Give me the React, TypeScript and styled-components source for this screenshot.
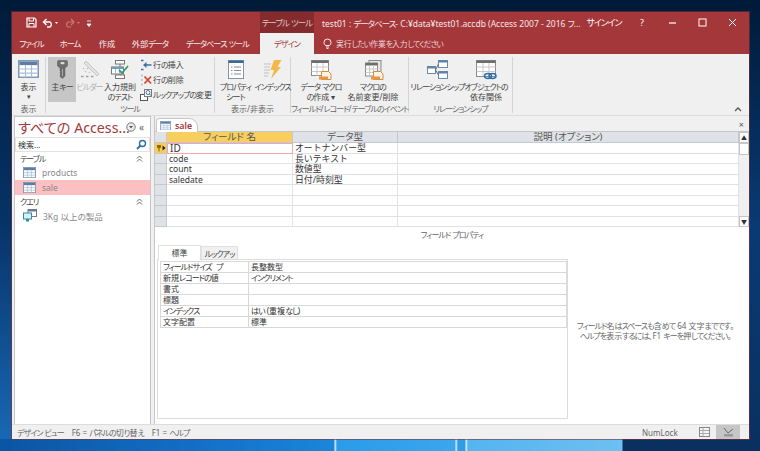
import React from 'react'
import styled, { createGlobalStyle } from 'styled-components'

const Global = createGlobalStyle`
  html, body { margin: 0; padding: 0; height: 100%; }
  body {
    font-family: "Noto Sans", "Noto Sans CJK JP", sans-serif;
    font-feature-settings: "palt" 1;
    overflow: hidden;
  }
`

const RED = '#a4373a'

// kana in the screenshot's UI font are much narrower than the kanji
const Kana = styled.span`
  letter-spacing: -0.12em;
`

const T = ({ children }: { children: string }) => (
  <>
    {children.split(/([ァ-ヶーぁ-ん]+)/).map((part, i) =>
      i % 2 ? <Kana key={i}>{part}</Kana> : part
    )}
  </>
)

const TableIcon = ({ size = 14 }: { size?: number }) => (
  <svg width={size} height={size * 0.86} viewBox="0 0 14 12">
    <rect x="0.5" y="0.5" width="13" height="11" fill="#fff" stroke="#7d98b5" />
    <rect x="1" y="1" width="12" height="2.4" fill="#5d7ea3" />
    <path d="M5 3.5v8M9 3.500v8M1 6h12M1 8.700h12" stroke="#a9bdd3" strokeWidth="0.8" />
  </svg>
)

const QueryIcon = () => (
  <svg width="14" height="13" viewBox="0 0 14 13">
    <rect x="5" y="0.5" width="8.5" height="7" fill="#fff" stroke="#6a7d90" />
    <rect x="5" y="0.5" width="8.5" height="2" fill="#6a7d90" />
    <rect x="0.5" y="4" width="8" height="6" fill="#dceef3" stroke="#2e8ca6" />
    <rect x="3" y="10" width="3" height="2.5" fill="#2e8ca6" />
  </svg>
)

const KeyIcon = () => (
  <svg width="11" height="19" viewBox="0 0 11 19">
    <path d="M1 .5h9l.5 1v4.500L8 8v8l-2.500 2.500L3 16.500v-1.500l1-.7-1-.8v-1l1-.7-1-.8V8L.5 6V1.500z" fill="#6d6d6d" stroke="#5c5c5c" strokeWidth="0.5" />
    <rect x="3.500" y="2" width="4" height="2.200" rx="0.8" fill="#d8d8d8" />
    <path d="M5.500 9v7" stroke="#b4b4b4" strokeWidth="0.8" />
  </svg>
)

const BuilderIcon = () => (
  <svg width="20" height="19" viewBox="0 0 20 19">
    <path d="M6 1l13 13-2 2L4 3z" fill="#e2e2e2" stroke="#c4c4c4" />
    <path d="M3 8l1 1M7 8l1 1M5 11l1 1M9 12l1 1" stroke="#bcbcbc" strokeWidth="1.200" />
    <path d="M1 16.500h2.500M6 16.500h2.500M11 16.500h2.500" stroke="#9c9c9c" strokeWidth="1.400" />
  </svg>
)

const ValidationIcon = () => (
  <svg width="20" height="19" viewBox="0 0 20 19">
    <path d="M10 4v3M10 14v2" stroke="#777" />
    <rect x="5.500" y="0.500" width="9" height="3.500" fill="#fff" stroke="#777" />
    <rect x="5.500" y="15" width="9" height="3.500" fill="#fff" stroke="#777" />
    <rect x="1.500" y="7" width="12" height="7" fill="#fff" stroke="#777" />
    <rect x="1.500" y="7" width="12" height="2" fill="#6f9dbb" />
    <path d="M5.500 9v5M9.500 9v5" stroke="#9bb" />
    <path d="M9 10l3 3 6-7" fill="none" stroke="#3c9a5f" strokeWidth="1.800" />
  </svg>
)

const InsertRowIcon = () => (
  <svg width="12" height="12" viewBox="0 0 12 12">
    <path d="M1 1.500h2.500M1 10.500h2.500" stroke="#3e6f9e" strokeWidth="1.500" />
    <path d="M11.500 6H6" stroke="#6a8fb3" strokeWidth="2" />
    <path d="M6.500 3L3 6l3.500 3z" fill="#3e6f9e" />
  </svg>
)

const DeleteRowIcon = () => (
  <svg width="12" height="12" viewBox="0 0 12 12">
    <path d="M1 1.500h2M1 6h2M1 10.500h2" stroke="#a9bdd0" strokeWidth="1.300" />
    <path d="M4.500 2.500l6.500 7M11 2.500l-6.500 7" stroke="#d2452f" strokeWidth="1.800" />
  </svg>
)

const LookupIcon = () => (
  <svg width="12" height="12" viewBox="0 0 12 12">
    <rect x="0.500" y="5.500" width="7" height="6" fill="#fff" stroke="#555" />
    <rect x="4.500" y="0.500" width="7" height="7" fill="#fff" stroke="#7c7c7c" />
    <circle cx="8" cy="3.500" r="2" fill="none" stroke="#3e6f9e" />
    <path d="M9.500 5l2 2" stroke="#3e6f9e" />
  </svg>
)

const SheetIcon = () => (
  <svg width="16" height="19" viewBox="0 0 16 19">
    <rect x="0.500" y="0.500" width="15" height="18" fill="#fff" stroke="#8a95a0" />
    <rect x="0.500" y="0.500" width="15" height="2.500" fill="#3d6b94" />
    <path d="M3 7h1.500M6 7h7M3 10.500h1.500M6 10.500h7M3 14h1.500M6 14h7" stroke="#8a8a8a" />
  </svg>
)

const IndexIcon = () => (
  <svg width="18" height="19" viewBox="0 0 18 19">
    <path d="M0 4h7M0 7h6M0 10h6M0 13h5M0 16h4" stroke="#cfcfcf" strokeWidth="1.400" />
    <path d="M10 0h7.500l-4 7H17L7 19l3-9H6.500z" fill="#f2b84a" />
  </svg>
)

const MacroIcon = ({ stack }: { stack?: boolean }) => (
  <svg width="21" height="20" viewBox="0 0 21 20">
    {stack && <rect x="6" y="0.500" width="12" height="14" fill="#e6e6e6" stroke="#8a8a8a" />}
    <rect x={stack ? 2.500 : 0.500} y={stack ? 3 : 0.500} width={stack ? 12 : 17} height={stack ? 13 : 15} fill="#fff" stroke="#8a8a8a" />
    <rect x={stack ? 2.500 : 0.500} y={stack ? 3 : 0.500} width={stack ? 12 : 17} height="2.500" fill="#6e6e6e" />
    <path d={stack ? 'M6.500 5.500v10M10.500 5.500v10M2.500 9h12M2.500 12.500h12' : 'M6 3v13M12 3v13M.5 7h17M.5 11.500h17'} stroke="#c8c8c8" />
    <path d="M10.500 11.500h7l2.500 2.500v5.500h-9.500z" fill="#fff4e6" stroke="#d98a3c" />
    <path d="M8 16.500h9v3H8z" fill="#e8973f" />
  </svg>
)

const RelationIcon = () => (
  <svg width="21" height="19" viewBox="0 0 21 19">
    <rect x="11.500" y="0.500" width="9" height="7" fill="#fff" stroke="#6b8bab" />
    <rect x="11.500" y="0.500" width="9" height="2" fill="#5d83a8" />
    <rect x="0.500" y="6.500" width="8" height="7" fill="#fff" stroke="#6b8bab" />
    <rect x="0.500" y="6.500" width="8" height="2" fill="#5d83a8" />
    <rect x="11.500" y="11.500" width="9" height="7" fill="#fff" stroke="#6b8bab" />
    <rect x="11.500" y="11.500" width="9" height="2" fill="#5d83a8" />
    <path d="M8.500 10l3-6M8.500 10l3 5" stroke="#666" />
  </svg>
)

const DependencyIcon = () => (
  <svg width="21" height="20" viewBox="0 0 21 20">
    <rect x="0.500" y="0.500" width="19" height="16" fill="#fff" stroke="#8a8a8a" />
    <rect x="0.500" y="0.500" width="19" height="2.500" fill="#6e6e6e" />
    <path d="M7 3v13M13 3v13M.5 7h19M.5 11.500h19" stroke="#c8c8c8" />
    <ellipse cx="12" cy="16" rx="3.500" ry="2.400" fill="none" stroke="#2f6ea8" strokeWidth="1.500" />
    <ellipse cx="16.500" cy="16" rx="3.500" ry="2.400" fill="none" stroke="#2f6ea8" strokeWidth="1.500" />
  </svg>
)

const DoubleUp = () => (
  <svg width="7" height="7" viewBox="0 0 7 7">
    <path d="M1 3.500l2.500-2.500 2.500 2.500M1 6.500l2.500-2.500 2.500 2.500" fill="none" stroke="#555" strokeWidth="0.900" />
  </svg>
)

const Page = styled.div`
  width: 760px;
  height: 451px;
  box-sizing: border-box;
  padding: 12px 11px 12px 12px;
  background:
    linear-gradient(90deg, #0b55a2 0, #1474cc 230px, #1b86d8 334px, #e8f4fc 335px, #2a9ce8 337px, #3aa6ee 455px, #e8f4fc 456px, #2f9ce6 458px, #2f9ce6 465px, #e8f4fc 466px, #55b4f0 468px, #6cc0f2 622px, #0a3060 623px) 0 439px / 100% 12px no-repeat,
    linear-gradient(180deg, #001a38 0%, #063468 50%, #1a6ab8 100%) 0 0 / 12px 100% no-repeat,
    linear-gradient(180deg, #001a38 0%, #0a3a74 50%, #0a3060 100%);
`

const Window = styled.div`
  width: 737px;
  height: 427px;
  display: flex;
  flex-direction: column;
  background: #fff;
  box-shadow: 0 0 0 1px rgba(130, 50, 55, 0.6);
`

const TitleBar = styled.div`
  height: 21px;
  flex: none;
  display: flex;
  align-items: center;
  background: ${RED};
  color: #fff;
  font-size: 9px;
  white-space: nowrap;
`

const Quick = styled.div`
  width: 248px;
  flex: none;
  display: flex;
  align-items: center;
  gap: 5px;
  padding-left: 14px;
  box-sizing: border-box;
`

const ToolLabel = styled.div`
  width: 54px;
  flex: none;
  height: 21px;
  line-height: 21px;
  text-align: center;
  background: #842b2e;
  color: #e3c3c4;
  font-size: 8.5px;
`

const DocTitle = styled.div`
  width: 267px;
  flex: none;
  padding-left: 8px;
  box-sizing: border-box;
  font-size: 8.5px;
  color: #f6e7e7;
`

const WinButtons = styled.div`
  flex: 1;
  display: flex;
  align-items: center;
  font-size: 9px;
`

const SignIn = styled.span`
  width: 46px;
  text-align: center;
`

const WinBtn = styled.span`
  width: 30px;
  display: flex;
  justify-content: center;
`

const TabBar = styled.div`
  height: 21px;
  flex: none;
  display: flex;
  background: ${RED};
  font-size: 8.2px;
  color: #fbeeee;
  white-space: nowrap;
`

const RibbonTab = styled.div<{ $w: number; $active?: boolean }>`
  width: ${p => p.$w}px;
  text-align: center;
  line-height: 21px;
  ${p => p.$active && `background: #f0f0f0; color: ${RED};`}
`

const TellMe = styled.div`
  display: flex;
  align-items: center;
  gap: 4px;
  padding-left: 9px;
  font-size: 7.8px;
  color: #eed5d5;
`

const Ribbon = styled.div`
  height: 62px;
  flex: none;
  display: flex;
  background: #f0f0f0;
  border-bottom: 1px solid #dcdcdc;
  box-sizing: border-box;
  position: relative;
`

const Group = styled.div<{ $w: number; $last?: boolean }>`
  width: ${p => p.$w}px;
  flex: none;
  box-sizing: border-box;
  display: flex;
  flex-direction: column;
  margin: 3px 0 2px;
  ${p => !p.$last && 'border-right: 1px solid #d4d4d4;'}
`

const Buttons = styled.div<{ $pad?: number }>`
  flex: 1;
  display: flex;
  padding-left: ${p => p.$pad ?? 0}px;
`

const GroupLabel = styled.div`
  height: 13px;
  line-height: 13px;
  text-align: center;
  font-size: 8px;
  color: #666;
  white-space: nowrap;
`

const BigBtn = styled.div<{ $w: number; $on?: boolean; $off?: boolean }>`
  width: ${p => p.$w}px;
  flex: none;
  height: 45px;
  display: flex;
  flex-direction: column;
  align-items: center;
  font-size: 8px;
  line-height: 10px;
  text-align: center;
  white-space: nowrap;
  color: ${p => (p.$off ? '#b0b0b0' : '#444')};
  ${p => p.$on && 'background: #c6c6c6;'}
`

const IconSlot = styled.div`
  height: 25px;
  padding-top: 3px;
  box-sizing: border-box;
  display: flex;
  align-items: flex-start;
  justify-content: center;
  flex: none;
`

const BtnText = styled.div`
  text-align: center;
`

const Caret = styled.span`
  font-size: 7px;
  line-height: 9px;
`

const SmallStack = styled.div`
  display: flex;
  flex-direction: column;
  gap: 2px;
  padding: 1px 0 0 3px;
`

const SmallBtn = styled.div`
  height: 13px;
  display: flex;
  align-items: center;
  gap: 1px;
  font-size: 8px;
  color: #444;
  white-space: nowrap;
`

const Collapse = styled.span`
  position: absolute;
  right: 7px;
  bottom: 3px;
  line-height: 8px;
`

const Body = styled.div`
  flex: 1;
  min-height: 0;
  display: flex;
  background: #f0f0f0;
`

const NavPane = styled.div`
  width: 137px;
  flex: none;
  margin-left: 2px;
  background: #fff;
  border: 1px solid #c6c6c6;
  border-bottom: none;
  box-sizing: border-box;
`

const NavHead = styled.div`
  height: 20px;
  display: flex;
  align-items: center;
  padding-left: 3px;
  color: ${RED};
  font-size: 14.2px;
  white-space: nowrap;
`

const NavTitle = styled.span`
  width: 108px;
  flex: none;
`

const Chevron = styled.span`
  font-size: 10px;
  line-height: 10px;
  color: #666;
  margin-left: 3px;
`

const SearchBox = styled.div`
  height: 15px;
  display: flex;
  justify-content: space-between;
  align-items: center;
  padding: 0 2px;
  border: 1px solid #e2e2e2;
  box-sizing: border-box;
  font-size: 8px;
  color: #333;
`

const NavSection = styled.div`
  height: 13px;
  display: flex;
  justify-content: space-between;
  align-items: center;
  padding: 0 7px 0 5px;
  font-size: 8px;
  color: #444;
`

const NavItem = styled.div<{ $on?: boolean }>`
  height: 15px;
  display: flex;
  align-items: center;
  gap: 6px;
  padding-left: 8px;
  font-size: 8.5px;
  color: #888;
  background: ${p => (p.$on ? '#fcc0c2' : 'transparent')};
`

const Splitter = styled.div`
  width: 3px;
  flex: none;
`

const Main = styled.div`
  flex: 1;
  min-width: 0;
  display: flex;
  flex-direction: column;
  background: #fff;
  border-left: 1px solid #c6c6c6;
`

const DocTabs = styled.div`
  height: 15px;
  flex: none;
  display: flex;
  align-items: flex-end;
  justify-content: space-between;
  padding: 0 5px 0 1px;
  background: #f0f0f0;
  border-bottom: 1px solid #c6c6c6;
`

const DocTab = styled.div`
  width: 42px;
  height: 14px;
  display: flex;
  align-items: center;
  gap: 4px;
  padding-left: 3px;
  box-sizing: border-box;
  background: #fff;
  border: 1px solid #c6c6c6;
  border-bottom: none;
  border-radius: 4px 9px 0 0;
  color: ${RED};
  font-size: 8.8px;
  font-weight: 600;
  margin-bottom: -1px;
`

const DocClose = styled.span`
  font-size: 9px;
  line-height: 13px;
  color: #555;
`

const GridWrap = styled.div`
  display: flex;
  flex: none;
`

const Grid = styled.div`
  width: 584px;
  display: grid;
  grid-template-columns: 12px 126px 105px 1fr;
  grid-template-rows: 11px repeat(8, 10.5px);
`

const HeadCell = styled.div<{ $sel?: boolean }>`
  background: ${p => (p.$sel ? '#f6cf5e' : '#dfe2e6')};
  border-right: 1px solid #c5c9cf;
  border-bottom: 1px solid #c5c9cf;
  box-sizing: border-box;
  text-align: center;
  font-size: 9.5px;
  line-height: 10px;
  color: #555;
`

const RowHead = styled.div<{ $key?: boolean }>`
  background: ${p => (p.$key ? '#f7cd57' : '#dfe2e6')};
  border-right: 1px solid #c5c9cf;
  border-bottom: 1px solid #c5c9cf;
  box-sizing: border-box;
  display: flex;
  align-items: center;
  justify-content: center;
`

const Cell = styled.div<{ $focus?: boolean; $jp?: boolean }>`
  border-right: 1px solid #dfe2ea;
  border-bottom: 1px solid #dfe2ea;
  box-sizing: border-box;
  padding-left: 2px;
  font-size: ${p => (p.$jp ? 8.9 : 8.5)}px;
  font-feature-settings: normal;
  line-height: 10px;
  color: #333;
  white-space: nowrap;
  ${p => p.$focus && 'border: 1px solid #f0a8aa; font-size: 10px; line-height: 9px;'}
`

const Scroll = styled.div`
  flex: 1;
  display: flex;
  flex-direction: column;
  background: #f0f0f0;
`

const ScrollBtn = styled.div`
  height: 11px;
  text-align: center;
  font-size: 6px;
  line-height: 11px;
  background: #fff;
  border: 1px solid #c6c6c6;
  box-sizing: border-box;
  color: #333;
`

const ScrollThumb = styled.div`
  height: 12px;
  background: #fff;
  border: 1px solid #c6c6c6;
  box-sizing: border-box;
`

const ScrollTrack = styled.div`
  flex: 1;
`

const PropsTitle = styled.div`
  height: 17px;
  flex: none;
  text-align: center;
  font-size: 8px;
  line-height: 15px;
  color: #666;
`

const PropsArea = styled.div`
  flex: 1;
  min-height: 0;
  display: flex;
  padding: 0 0 5px 2px;
`

const PropsLeft = styled.div`
  width: 411px;
  flex: none;
  display: flex;
  flex-direction: column;
`

const PropTabs = styled.div`
  display: flex;
  height: 15px;
  flex: none;
  margin-left: 1px;
  align-items: flex-end;
`

const PropTab = styled.div<{ $on?: boolean }>`
  width: ${p => (p.$on ? 43 : 37)}px;
  height: ${p => (p.$on ? 15 : 13)}px;
  box-sizing: border-box;
  text-align: center;
  font-size: 8px;
  line-height: 13px;
  color: #444;
  background: ${p => (p.$on ? '#fff' : '#f0f0f0')};
  border: 1px solid #e0e0e0;
  border-bottom: none;
  margin-bottom: ${p => (p.$on ? -1 : 0)}px;
  position: relative;
`

const PropBox = styled.div`
  flex: 1;
  border: 1px solid #dcdcdc;
  padding: 1px 0 0 2px;
  box-sizing: border-box;
  background: #fff;
`

const PropTable = styled.div`
  display: grid;
  grid-template-columns: 88px 318px;
  grid-auto-rows: 11px;
  border-top: 1px solid #d8d8d8;
  border-left: 1px solid #d8d8d8;
`

const PropCell = styled.div`
  border-right: 1px solid #d8d8d8;
  border-bottom: 1px solid #d8d8d8;
  box-sizing: border-box;
  padding-left: 2px;
  font-size: 8px;
  line-height: 10px;
  color: #333;
  white-space: nowrap;
`

const Help = styled.div`
  flex: 1;
  align-self: flex-start;
  margin-top: 77px;
  padding-right: 6px;
  text-align: center;
  font-size: 8px;
  line-height: 10px;
  color: #666;
  white-space: nowrap;
`

const StatusBar = styled.div`
  height: 15px;
  flex: none;
  display: flex;
  align-items: center;
  background: #f0f0f0;
  border-top: 1px solid #dcdcdc;
  box-sizing: border-box;
  padding: 0 9px 0 5px;
  font-size: 8px;
  color: #666;
  white-space: nowrap;
`

const StatusText = styled.div`
  flex: 1;
  display: flex;
  gap: 8px;
`

const NumLock = styled.div`
  width: 50px;
  font-size: 8px;
`

const ViewBtn = styled.div<{ $on?: boolean }>`
  width: 24px;
  height: 14px;
  display: flex;
  align-items: center;
  justify-content: center;
  background: ${p => (p.$on ? '#c6c6c6' : 'transparent')};
`

const fields = [
  ['code', '長いテキスト'],
  ['count', '数値型'],
  ['saledate', '日付/時刻型'],
  ['', ''],
  ['', ''],
  ['', ''],
  ['', ''],
]

const props = [
  ['フィールドサイズ', '長整数型'],
  ['新規レコードの値', 'インクリメント'],
  ['書式', ''],
  ['標題', ''],
  ['インデックス', 'はい (重複なし)'],
  ['文字配置', '標準'],
]

const App = () => {
  return (
    <Page>
      <Global />
      <Window>
        <TitleBar>
          <Quick>
            <svg width="11" height="11" viewBox="0 0 11 11">
              <path d="M1 1h7.500L10 2.500V10H1z" fill="none" stroke="#fff" strokeWidth="1.200" />
              <path d="M3 1v3h4.500V1M3 10V6.500h5V10" fill="none" stroke="#fff" />
            </svg>
            <svg width="17" height="10" viewBox="0 0 17 10">
              <path d="M2 4h6a3 3 0 0 1 0 5H5" fill="none" stroke="#fff" strokeWidth="1.400" />
              <path d="M4.500 1L1.500 4l3 3" fill="none" stroke="#fff" strokeWidth="1.400" />
              <path d="M13 4h3l-1.500 2z" fill="#fff" />
            </svg>
            <svg width="17" height="10" viewBox="0 0 17 10">
              <path d="M9 4H4a3 3 0 0 0 0 5h3" fill="none" stroke="#c77c7e" strokeWidth="1.200" />
              <path d="M7 1l3 3-3 3" fill="none" stroke="#c77c7e" strokeWidth="1.200" />
              <path d="M13 4h3l-1.500 2z" fill="#c77c7e" />
            </svg>
            <svg width="6" height="8" viewBox="0 0 6 8">
              <path d="M1 2h4M1 5h4l-2 2.500z" fill="#fff" stroke="#fff" strokeWidth="0.800" />
            </svg>
          </Quick>
          <ToolLabel><T>テーブル ツール</T></ToolLabel>
          <DocTitle><T>test01 : データベース- C:¥data¥test01.accdb (Access 2007 - 2016 フ…</T></DocTitle>
          <WinButtons>
            <SignIn><T>サインイン</T></SignIn>
            <WinBtn>?</WinBtn>
            <WinBtn>
              <svg width="9" height="9" viewBox="0 0 9 9"><path d="M1 5h7" stroke="#fff" strokeWidth="1.200" /></svg>
            </WinBtn>
            <WinBtn>
              <svg width="9" height="9" viewBox="0 0 9 9"><rect x="1" y="1" width="7" height="7" fill="none" stroke="#fff" /></svg>
            </WinBtn>
            <WinBtn>
              <svg width="9" height="9" viewBox="0 0 9 9"><path d="M1 1l7 7M8 1L1 8" stroke="#fff" /></svg>
            </WinBtn>
          </WinButtons>
        </TitleBar>
        <TabBar>
          <RibbonTab $w={39}><T>ファイル</T></RibbonTab>
          <RibbonTab $w={38}><T>ホーム</T></RibbonTab>
          <RibbonTab $w={36}>作成</RibbonTab>
          <RibbonTab $w={50}><T>外部データ</T></RibbonTab>
          <RibbonTab $w={85}><T>データベース ツール</T></RibbonTab>
          <RibbonTab $w={54} $active><T>デザイン</T></RibbonTab>
          <TellMe>
            <svg width="9" height="11" viewBox="0 0 9 11">
              <path d="M2.500 7.500C1.500 6.500 1 5.500 1 4.500a3.500 3.500 0 0 1 7 0c0 1-.5 2-1.500 3zM3 9h3M3.500 10.500h2" fill="none" stroke="#fff" strokeWidth="0.900" />
            </svg>
            <span><T>実行したい作業を入力してください</T></span>
          </TellMe>
        </TabBar>
        <Ribbon>
          <Group $w={34}>
            <Buttons>
              <BigBtn $w={33}>
                <IconSlot><TableIcon size={21} /></IconSlot>
                表示
                <Caret>▾</Caret>
              </BigBtn>
            </Buttons>
            <GroupLabel>表示</GroupLabel>
          </Group>
          <Group $w={169}>
            <Buttons $pad={2}>
              <BigBtn $w={28} $on>
                <IconSlot><KeyIcon /></IconSlot>
                <BtnText><T>主キー</T></BtnText>
              </BigBtn>
              <BigBtn $w={27} $off>
                <IconSlot><BuilderIcon /></IconSlot>
                <BtnText><T>ビルダー</T></BtnText>
              </BigBtn>
              <BigBtn $w={34}>
                <IconSlot><ValidationIcon /></IconSlot>
                <BtnText>入力規則</BtnText>
                <BtnText><T>のテスト</T></BtnText>
              </BigBtn>
              <SmallStack>
                <SmallBtn><InsertRowIcon /><span><T>行の挿入</T></span></SmallBtn>
                <SmallBtn><DeleteRowIcon /><span><T>行の削除</T></span></SmallBtn>
                <SmallBtn><LookupIcon /><span><T>ルックアップの変更</T></span></SmallBtn>
              </SmallStack>
            </Buttons>
            <GroupLabel><T>ツール</T></GroupLabel>
          </Group>
          <Group $w={76}>
            <Buttons $pad={2}>
              <BigBtn $w={37}>
                <IconSlot><SheetIcon /></IconSlot>
                <BtnText><T>プロパティ</T></BtnText>
                <BtnText><T>シート</T></BtnText>
              </BigBtn>
              <BigBtn $w={37}>
                <IconSlot><IndexIcon /></IconSlot>
                <BtnText><T>インデックス</T></BtnText>
              </BigBtn>
            </Buttons>
            <GroupLabel>表示/非表示</GroupLabel>
          </Group>
          <Group $w={118}>
            <Buttons $pad={4}>
              <BigBtn $w={52}>
                <IconSlot><MacroIcon /></IconSlot>
                <BtnText><T>データ マクロ</T></BtnText>
                <BtnText><T>の作成 ▾</T></BtnText>
              </BigBtn>
              <BigBtn $w={52}>
                <IconSlot><MacroIcon stack /></IconSlot>
                <BtnText><T>マクロの</T></BtnText>
                <BtnText><T>名前変更/削除</T></BtnText>
              </BigBtn>
            </Buttons>
            <GroupLabel><T>フィールド/レコード/テーブルのイベント</T></GroupLabel>
          </Group>
          <Group $w={104}>
            <Buttons $pad={3}>
              <BigBtn $w={51}>
                <IconSlot><RelationIcon /></IconSlot>
                <BtnText><T>リレーションシップ</T></BtnText>
              </BigBtn>
              <BigBtn $w={46}>
                <IconSlot><DependencyIcon /></IconSlot>
                <BtnText><T>オブジェクトの</T></BtnText>
                <BtnText>依存関係</BtnText>
              </BigBtn>
            </Buttons>
            <GroupLabel><T>リレーションシップ</T></GroupLabel>
          </Group>
          <Group $w={10} $last />
          <Collapse>
            <svg width="8" height="6" viewBox="0 0 8 6"><path d="M1 5l3-3 3 3" fill="none" stroke="#555" strokeWidth="1.300" /></svg>
          </Collapse>
        </Ribbon>
        <Body>
          <NavPane>
            <NavHead>
              <NavTitle>すべての Access...</NavTitle>
              <svg width="10" height="10" viewBox="0 0 10 10">
                <circle cx="5" cy="5" r="4.200" fill="#eee" stroke="#777" />
                <path d="M3 4h4L5 6.500z" fill="#555" />
              </svg>
              <Chevron>«</Chevron>
            </NavHead>
            <SearchBox>
              検索...
              <svg width="11" height="11" viewBox="0 0 11 11">
                <circle cx="6.500" cy="4.500" r="3" fill="none" stroke="#2a6ca8" strokeWidth="1.400" />
                <path d="M4.500 6.500L1 10" stroke="#2a6ca8" strokeWidth="1.800" />
              </svg>
            </SearchBox>
            <NavSection><span><T>テーブル</T></span><DoubleUp /></NavSection>
            <NavItem><TableIcon size={13} />products</NavItem>
            <NavItem $on><TableIcon size={13} />sale</NavItem>
            <NavSection><span><T>クエリ</T></span><DoubleUp /></NavSection>
            <NavItem><QueryIcon />3Kg 以上の製品</NavItem>
          </NavPane>
          <Splitter />
          <Main>
            <DocTabs>
              <DocTab><TableIcon size={11} />sale</DocTab>
              <DocClose>×</DocClose>
            </DocTabs>
            <GridWrap>
              <Grid>
                <HeadCell />
                <HeadCell $sel>フィールド 名</HeadCell>
                <HeadCell>データ型</HeadCell>
                <HeadCell>説明 (オプション)</HeadCell>
                <RowHead $key>
                  <svg width="10" height="8" viewBox="0 0 10 8">
                    <path d="M1 1h4v2.500L3.500 4.500V7.500H2.500V4.500L1 3.500z" fill="#8a6a10" />
                    <path d="M6.500 1.500L9.500 4l-3 2.500z" fill="#222" />
                  </svg>
                </RowHead>
                <Cell $focus>ID</Cell>
                <Cell $jp>オートナンバー型</Cell>
                <Cell />
                {fields.map(([name, type], i) => (
                  <React.Fragment key={i}>
                    <RowHead />
                    <Cell>{name}</Cell>
                    <Cell $jp>{type}</Cell>
                    <Cell />
                  </React.Fragment>
                ))}
              </Grid>
              <Scroll>
                <ScrollBtn>▲</ScrollBtn>
                <ScrollThumb />
                <ScrollTrack />
                <ScrollBtn>▼</ScrollBtn>
              </Scroll>
            </GridWrap>
            <PropsTitle><T>フィールド プロパティ</T></PropsTitle>
            <PropsArea>
              <PropsLeft>
                <PropTabs>
                  <PropTab $on>標準</PropTab>
                  <PropTab><T>ルックアップ</T></PropTab>
                </PropTabs>
                <PropBox>
                  <PropTable>
                    {props.map(([label, value]) => (
                      <React.Fragment key={label}>
                        <PropCell><T>{label}</T></PropCell>
                        <PropCell><T>{value}</T></PropCell>
                      </React.Fragment>
                    ))}
                  </PropTable>
                </PropBox>
              </PropsLeft>
              <Help>
                <T>フィールド名はスペースも含めて 64 文字までです。</T><br />
                <T>ヘルプを表示するには、F1 キーを押してください。</T>
              </Help>
            </PropsArea>
          </Main>
        </Body>
        <StatusBar>
          <StatusText>
            <span><T>デザイン ビュー</T></span>
            <span><T>F6 = パネルの切り替え</T></span>
            <span><T>F1 = ヘルプ</T></span>
          </StatusText>
          <NumLock>NumLock</NumLock>
          <ViewBtn>
            <svg width="11" height="10" viewBox="0 0 11 10">
              <rect x="0.500" y="0.500" width="10" height="9" fill="#f4f4f4" stroke="#888" />
              <path d="M4 1v8M1 3.500h9M1 6.500h9" stroke="#aaa" />
            </svg>
          </ViewBtn>
          <ViewBtn $on>
            <svg width="11" height="10" viewBox="0 0 11 10">
              <path d="M1 1l4 5 5-4" fill="none" stroke="#666" />
              <path d="M1 7h9v2.500H1z" fill="#999" />
            </svg>
          </ViewBtn>
        </StatusBar>
      </Window>
    </Page>
  )
}

export default App
